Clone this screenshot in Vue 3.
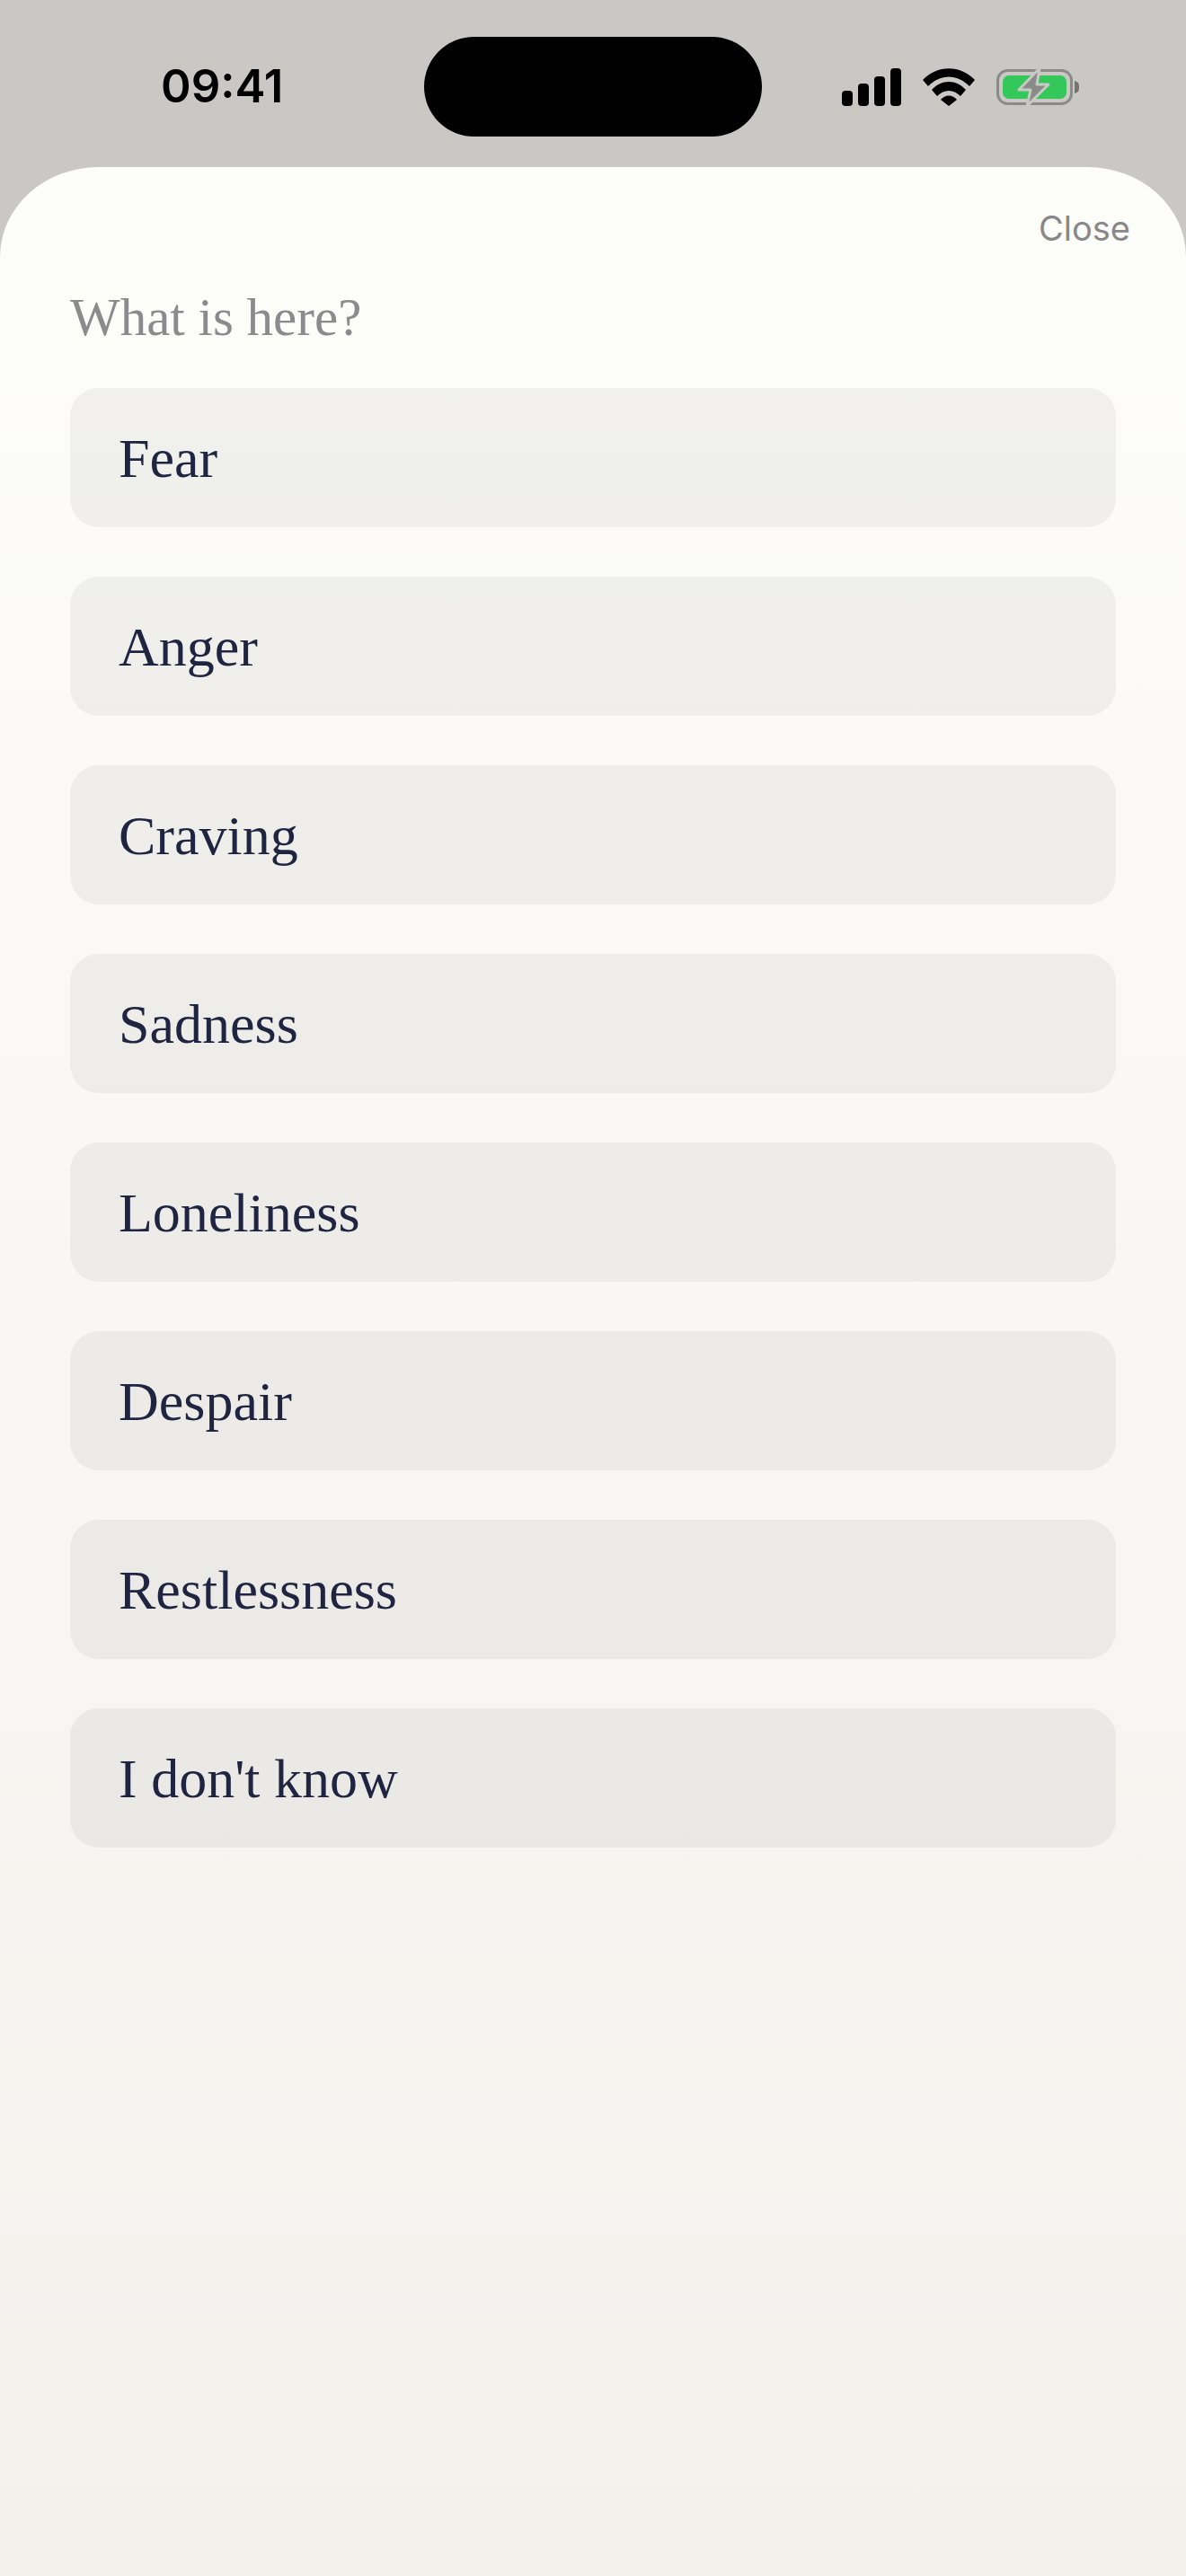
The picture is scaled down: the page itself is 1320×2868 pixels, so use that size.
<script setup>
const items = ['Fear', 'Anger', 'Craving', 'Sadness', 'Loneliness', 'Despair', 'Restlessness', "I don't know"]
</script>

<template>
  <div class="screen">
    <header class="status">
      <span class="time">09:41</span>
      <div class="island"></div>
      <div class="icons">
        <svg class="signal" width="66" height="42" viewBox="0 0 66 42">
          <rect x="0" y="25" width="12" height="17" rx="4" />
          <rect x="18" y="17" width="12" height="25" rx="4" />
          <rect x="36" y="9" width="12" height="33" rx="4" />
          <rect x="54" y="0" width="12" height="42" rx="4" />
        </svg>
        <svg class="wifi" width="58" height="42" viewBox="0 0 58 42">
          <path d="M0 13 C16 -4 42 -4 58 13 L52 20 C38 6 20 6 6 20 Z" />
          <path d="M10 24 C21 12 37 12 48 24 L42 31 C34 23 24 23 16 31 Z" />
          <path d="M20 35 C25 29 33 29 38 35 L29 42 Z" />
        </svg>
        <svg class="battery" width="94" height="44" viewBox="0 0 94 44">
          <rect x="1.5" y="3.5" width="82" height="37" rx="11" fill="none" stroke="#8a8a88" stroke-width="3" />
          <rect x="7" y="9" width="71" height="26" rx="7" fill="#34c759" />
          <path d="M87 15 C91 16 92 18 92 22 C92 26 91 28 87 29 Z" fill="#737372" />
          <path d="M48 1 L25 25 H38 L34 43 L58 19 H45 Z" fill="#8a8a88" stroke="#c9c9c5" stroke-width="3" stroke-linejoin="round" />
        </svg>
      </div>
    </header>
    <main class="sheet">
      <div class="close">Close</div>
      <h1 class="title">What is here?</h1>
      <ul class="list">
        <li v-for="item in items" :key="item" class="item">{{ item }}</li>
      </ul>
    </main>
  </div>
</template>

<style>
body { margin: 0; }
</style>

<style scoped>
.screen {
  width: 1320px;
  height: 2868px;
  display: flex;
  flex-direction: column;
  background: #c9c8c5;
  overflow: hidden;
}
.status {
  height: 186px;
  flex: none;
  position: relative;
  box-sizing: border-box;
}
.time {
  position: absolute;
  left: 179px;
  top: 68px;
  font: 600 51px/56px Inter, "Liberation Sans", sans-serif;
  color: #000;
}
.island {
  position: absolute;
  left: 472px;
  top: 41px;
  width: 376px;
  height: 111px;
  border-radius: 56px;
  background: #000;
}
.icons {
  position: absolute;
  left: 937px;
  top: 75px;
  display: flex;
  align-items: center;
  gap: 24px;
}
.signal, .wifi { fill: #000; display: block; }
.battery { display: block; }
.sheet {
  flex: 1;
  border-radius: 110px 110px 0 0 / 100px 100px 0 0;
  background: linear-gradient(180deg, #fdfdf9 0%, #f3f1ec 100%);
  padding: 0 78px;
  display: flex;
  flex-direction: column;
  position: relative;
}
.close {
  position: absolute;
  right: 62px;
  top: 45px;
  font: 400 38px/46px Inter, "Liberation Sans", sans-serif;
  color: #88888a;
}
.title {
  margin: 132px 0 0;
  font: 400 59px/70px "Liberation Serif", serif;
  color: #8b8b8d;
}
.list {
  list-style: none;
  margin: 44px 0 0;
  padding: 0;
  display: flex;
  flex-direction: column;
  gap: 55px;
}
.item {
  height: 155px;
  border-radius: 32px;
  padding: 0 54px;
  display: flex;
  align-items: center;
  background: rgba(30, 35, 60, 0.055);
  font: 400 62px/70px "Liberation Serif", serif;
  color: #1f2440;
}
</style>
